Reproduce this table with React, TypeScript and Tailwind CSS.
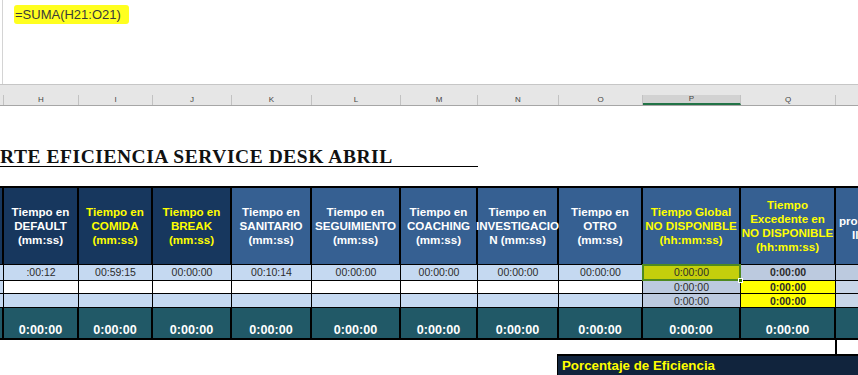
import React from 'react'

const widths = [
  'w-[4px]',
  'w-[75px]',
  'w-[74px]',
  'w-[79px]',
  'w-[80px]',
  'w-[89px]',
  'w-[77px]',
  'w-[81px]',
  'w-[84px]',
  'w-[98px]',
  'w-[95px]',
]

const letters = ['', 'H', 'I', 'J', 'K', 'L', 'M', 'N', 'O', 'P', 'Q']

const headers = [
  { lines: [], yellow: false, dark: true },
  { lines: ['Tiempo en', 'DEFAULT', '(mm:ss)'], yellow: false, dark: true },
  { lines: ['Tiempo en', 'COMIDA', '(mm:ss)'], yellow: true, dark: true },
  { lines: ['Tiempo en', 'BREAK', '(mm:ss)'], yellow: true, dark: true },
  { lines: ['Tiempo en', 'SANITARIO', '(mm:ss)'], yellow: false, dark: false },
  { lines: ['Tiempo en', 'SEGUIMIENTO', '(mm:ss)'], yellow: false, dark: false },
  { lines: ['Tiempo en', 'COACHING', '(mm:ss)'], yellow: false, dark: false },
  { lines: ['Tiempo en', 'INVESTIGACIO', 'N (mm:ss)'], yellow: false, dark: false },
  { lines: ['Tiempo en', 'OTRO', '(mm:ss)'], yellow: false, dark: false },
  { lines: ['Tiempo Global', 'NO DISPONIBLE', '(hh:mm:ss)'], yellow: true, dark: false },
  { lines: ['Tiempo', 'Excedente en', 'NO DISPONIBLE', '(hh:mm:ss)'], yellow: true, dark: false },
]

const firstRow = ['', ':00:12', '00:59:15', '00:00:00', '00:10:14', '00:00:00', '00:00:00', '00:00:00', '00:00:00']

const sans = "font-['Liberation_Sans',Arial,sans-serif]"

export default function App() {
  return (
    <div className={`relative w-[858px] h-[375px] overflow-hidden bg-white ${sans}`}>
      {/* formula bar */}
      <div className="h-[85px] border-b border-[#c6c6c6] bg-white pl-[2px]">
        <div className="h-full border-l border-[#d4d4d4] pt-[2px] pl-[11px]">
          <span className="inline-block bg-[#ffff1f] rounded-[3px] pl-[1px] pr-[8px] py-[1px] text-[13px] leading-[17px] text-[#3a3a3a]">
            =SUMA(H21:O21)
          </span>
        </div>
      </div>

      {/* column letters */}
      <div className="h-[10px] bg-[#e6e6e6]" />
      <div className="flex h-[11px] bg-[#e6e6e6] border-b border-[#a6a6a6] text-[8px] leading-[10px] text-[#444]">
        {letters.map((l, i) => (
          <div
            key={i}
            className={`${widths[i]} flex items-center justify-center border-r border-[#c2c2c2] ${
              l === 'P' ? 'bg-[#d2d2d2] border-b-2 border-b-[#217346]' : ''
            }`}
          >
            {l}
          </div>
        ))}
        <div className="flex-1" />
      </div>

      {/* title */}
      <div className="mt-[40px] w-[478px] h-[21px] border-b border-black">
        <div className="font-['Liberation_Serif',serif] font-bold text-[19.5px] leading-[21px] tracking-[0.55px] text-[#111] whitespace-nowrap">
          RTE EFICIENCIA SERVICE DESK ABRIL
        </div>
      </div>

      {/* table */}
      <div className="mt-[19px] border-t-2 border-black">
        {/* headers */}
        <div className="flex h-[77px] border-b border-black">
          {headers.map((h, i) => (
            <div
              key={i}
              className={`${widths[i]} flex flex-col items-center justify-center border-r-2 border-black text-center font-bold text-[11.6px] leading-[14px] ${
                h.dark ? 'bg-[#17375e]' : 'bg-[#366092]'
              } ${h.yellow ? 'text-[#ffff00]' : 'text-white'}`}
            >
              {h.lines.map((t) => (
                <span key={t} className="whitespace-nowrap">
                  {t}
                </span>
              ))}
            </div>
          ))}
          <div className="flex-1 bg-[#366092] flex flex-col justify-center pt-[4px] font-bold text-[11.6px] leading-[14px] text-white whitespace-nowrap overflow-hidden">
            <span className="pl-[3px]">pro</span>
            <span className="pl-[16px]">Il</span>
          </div>
        </div>

        {/* data row 1 */}
        <div className="flex h-[16px] border-b border-black text-[10.5px] text-[#2b2b2b]">
          {firstRow.map((v, i) => (
            <div key={i} className={`${widths[i]} flex items-center justify-center border-r border-black bg-[#c5d9f1]`}>
              {v}
            </div>
          ))}
          <div className={`${widths[9]} relative flex items-center justify-center border-r border-black bg-[#c4cf0c]`}>
            0:00:00
            <div className="absolute -left-[1px] -top-[1px] -right-[1px] -bottom-[1px] border-2 border-[#4f8a1f]" />
            <div className="absolute -right-[3px] -bottom-[3px] w-[5px] h-[5px] bg-[#3f7a1a] border border-white" />
          </div>
          <div className={`${widths[10]} flex items-center justify-center border-r border-black bg-[#bccadf] font-bold`}>
            0:00:00
          </div>
          <div className="flex-1 bg-[#bccadf]" />
        </div>

        {/* data rows 2 and 3 */}
        {[0, 1].map((r) => (
          <div key={r} className={`flex ${r === 0 ? 'h-[13px]' : 'h-[14px]'} border-b border-black text-[10.5px] leading-[12px] text-[#2b2b2b]`}>
            {widths.slice(0, 9).map((w, i) => (
              <div
                key={i}
                className={`${w} border-r border-black ${i === 0 ? 'bg-[#c5d9f1]' : r === 0 ? 'bg-white' : 'bg-[#c5d9f1]'}`}
              />
            ))}
            <div className={`${widths[9]} flex items-center justify-center border-r border-black bg-[#bccadf]`}>
              0:00:00
            </div>
            <div className={`${widths[10]} flex items-center justify-center border-r border-black bg-[#ffff00] font-bold`}>
              0:00:00
            </div>
            <div className="flex-1 bg-[#c8d6e8]" />
          </div>
        ))}

        {/* totals */}
        <div className="flex h-[32px] border-b-2 border-black bg-[#215967] text-white font-bold text-[12.6px] leading-[14px]">
          {widths.map((w, i) => (
            <div key={i} className={`${w} flex items-end justify-center pb-[1px] border-r-2 border-black`}>
              {i === 0 ? '' : '0:00:00'}
            </div>
          ))}
          <div className="flex-1" />
        </div>
      </div>

      {/* below table */}
      <div className="w-[837px] h-[14px] border-r-2 border-black" />
      <div className="ml-[557px] h-[22px] border-t-2 border-l border-black bg-[#11243d] pl-[4px] text-[13.3px] leading-[19px] font-bold text-[#ffff00]">
        Porcentaje de Eficiencia
      </div>
    </div>
  )
}
